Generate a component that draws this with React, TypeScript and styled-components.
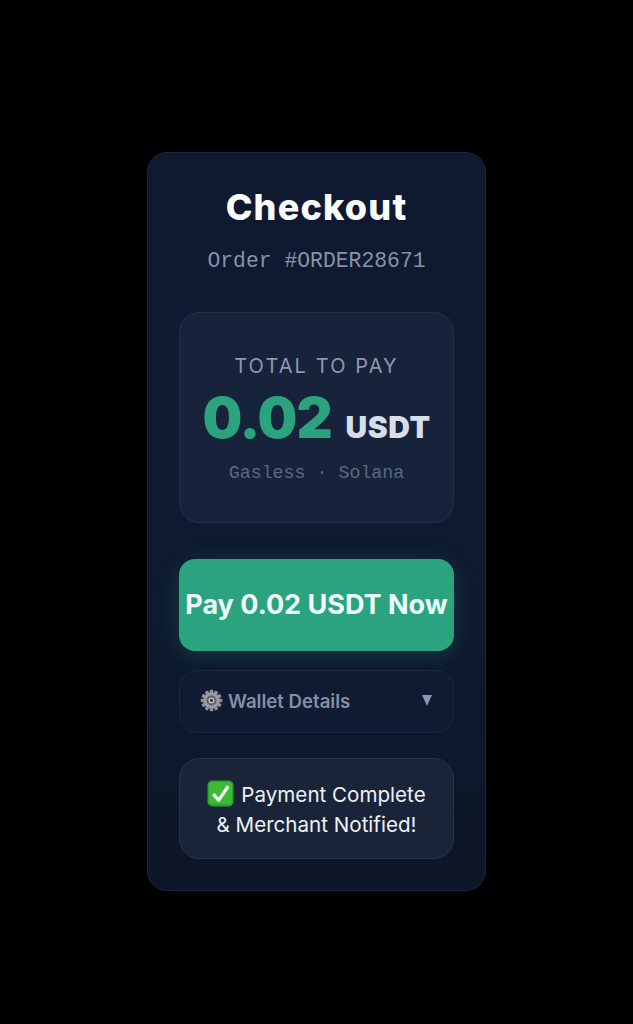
import styled, { createGlobalStyle } from "styled-components";

const GlobalStyle = createGlobalStyle`
  html, body {
    margin: 0;
    padding: 0;
    background: #000;
  }
  * {
    box-sizing: border-box;
  }
`;

const Page = styled.main`
  display: flex;
  justify-content: center;
  width: 100%;
  height: 1024px;
  padding-top: 152px;
  background: #000;
  font-family: Inter, "Liberation Sans", sans-serif;
`;

const Card = styled.section`
  display: flex;
  flex-direction: column;
  width: 339px;
  height: 739px;
  padding: 0 31px;
  background: linear-gradient(180deg, #0f1a30 0%, #0f1a30 60%, #0d1628 100%);
  border: 1px solid #1a2740;
  border-radius: 20px;
`;

const Title = styled.h1`
  margin: 32px 0 0;
  font-size: 36px;
  line-height: 44px;
  font-weight: 800;
  letter-spacing: 1.2px;
  text-align: center;
  color: #fbfcfe;
`;

const OrderNumber = styled.p`
  margin: 19px 0 0;
  font-family: "Liberation Mono", monospace;
  font-size: 21.4px;
  line-height: 26px;
  text-align: center;
  color: #8592a8;
`;

const TotalBox = styled.div`
  display: flex;
  flex-direction: column;
  align-items: center;
  height: 211px;
  margin-top: 38px;
  padding-top: 41px;
  background: #17223b;
  border: 1px solid #222f4a;
  border-radius: 20px;
`;

const TotalLabel = styled.div`
  font-size: 20px;
  line-height: 24px;
  letter-spacing: 2.1px;
  color: #8d99ad;
`;

const AmountRow = styled.div`
  display: flex;
  align-items: baseline;
  gap: 14px;
  margin-top: 5px;
`;

const Amount = styled.span`
  font-size: 56px;
  line-height: 70px;
  font-weight: 900;
  letter-spacing: -1px;
  color: #2ba37f;
`;

const Currency = styled.span`
  font-size: 30px;
  font-weight: 900;
  letter-spacing: 0.5px;
  color: #d6deea;
`;

const NetworkNote = styled.div`
  margin-top: 9px;
  font-family: "Liberation Mono", monospace;
  font-size: 18.3px;
  line-height: 22px;
  color: #5b6980;
`;

const PayButton = styled.button`
  display: flex;
  align-items: center;
  justify-content: center;
  height: 92px;
  margin-top: 36px;
  padding: 0 0 2px;
  border: 0;
  border-radius: 16px;
  background: #2ba37f;
  box-shadow: 0 4px 22px rgba(43, 163, 127, 0.22);
  font-family: inherit;
  font-size: 27px;
  font-weight: 700;
  white-space: nowrap;
  color: #effdf8;
`;

const DetailsToggle = styled.div`
  display: flex;
  align-items: center;
  justify-content: space-between;
  height: 63px;
  margin-top: 19px;
  padding: 0 21px 2px 20px;
  background: #101a31;
  border: 1px solid #1a2640;
  border-radius: 18px;
`;

const DetailsLabel = styled.span`
  display: flex;
  align-items: center;
  gap: 5px;
  font-size: 18.6px;
  font-weight: 600;
  color: #8490aa;
`;

const Caret = styled.span`
  width: 0;
  height: 0;
  border-left: 5.5px solid transparent;
  border-right: 5.5px solid transparent;
  border-top: 11px solid #8b97ae;
`;

const SuccessBox = styled.div`
  display: flex;
  flex-direction: column;
  align-items: center;
  height: 101px;
  margin-top: 25px;
  padding-top: 21px;
  background: #1a2438;
  border: 1px solid #27334a;
  border-radius: 20px;
  font-size: 20.6px;
  line-height: 30px;
  color: #edf1f6;
`;

const SuccessLine = styled.div`
  display: flex;
  align-items: center;
  gap: 7px;
`;

const CheckSvg = styled.svg`
  margin-top: -3px;
`;

const GearIcon = () => (
  <svg width="23" height="23" viewBox="0 0 24 24" aria-hidden="true">
    <g fill="#8f9097">
      {Array.from({ length: 12 }, (_, i) => (
        <rect key={i} x="10.2" y="0.8" width="3.6" height="5" rx="0.6" transform={`rotate(${i * 30} 12 12)`} />
      ))}
    </g>
    <circle cx="12" cy="12" r="8.6" fill="#9a9ba1" />
    <circle cx="12" cy="12" r="5.2" fill="#5f6067" />
    <circle cx="12" cy="12" r="3.2" fill="#b9bac0" />
    <circle cx="12" cy="12" r="1.5" fill="#2a2d38" />
  </svg>
);

const CheckIcon = () => (
  <CheckSvg width="27" height="27" viewBox="0 0 28 28" aria-hidden="true">
    <rect x="0.5" y="0.5" width="27" height="27" rx="5" fill="#25a52a" />
    <rect x="2" y="2" width="24" height="23" rx="4" fill="#3abb36" />
    <path d="M6.5 14.5 L12 21 L22 6.5" fill="none" stroke="#f4fbf2" strokeWidth="3.4" strokeLinejoin="round" />
  </CheckSvg>
);

export default function App() {
  return (
    <>
      <GlobalStyle />
      <Page>
        <Card>
          <Title>Checkout</Title>
          <OrderNumber>Order #ORDER28671</OrderNumber>
          <TotalBox>
            <TotalLabel>TOTAL TO PAY</TotalLabel>
            <AmountRow>
              <Amount>0.02</Amount>
              <Currency>USDT</Currency>
            </AmountRow>
            <NetworkNote>Gasless · Solana</NetworkNote>
          </TotalBox>
          <PayButton>Pay 0.02 USDT Now</PayButton>
          <DetailsToggle>
            <DetailsLabel>
              <GearIcon />
              Wallet Details
            </DetailsLabel>
            <Caret />
          </DetailsToggle>
          <SuccessBox>
            <SuccessLine>
              <CheckIcon />
              Payment Complete
            </SuccessLine>
            <div>&amp; Merchant Notified!</div>
          </SuccessBox>
        </Card>
      </Page>
    </>
  );
}
